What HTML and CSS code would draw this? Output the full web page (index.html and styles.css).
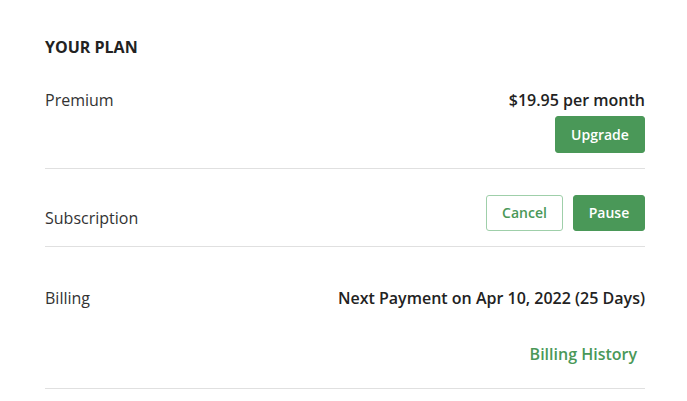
FILE: index.html
```html
<!DOCTYPE html>
<html lang="en">
<head>
<meta charset="utf-8">
<title>Your Plan</title>
<link rel="stylesheet" href="styles.css">
</head>
<body>
<section class="plan">
  <h2 class="plan-title">YOUR PLAN</h2>

  <div class="row row-premium">
    <div class="label">Premium</div>
    <div class="side">
      <div class="value">$19.95 per month</div>
      <button class="btn btn-solid btn-upgrade">Upgrade</button>
    </div>
  </div>

  <div class="row row-sub">
    <div class="label label-bottom">Subscription</div>
    <div class="actions">
      <button class="btn btn-outline">Cancel</button>
      <button class="btn btn-solid">Pause</button>
    </div>
  </div>

  <div class="row row-billing">
    <div class="label">Billing</div>
    <div class="side">
      <div class="value">Next Payment on Apr 10, 2022 (25 Days)</div>
      <a class="link" href="#">Billing History</a>
    </div>
  </div>
</section>
</body>
</html>
```

FILE: styles.css
```css
* { box-sizing: border-box; }

body {
  margin: 0;
  background: #ffffff;
  font-family: "Open Sans", "Noto Sans", sans-serif;
  color: #333333;
}

.plan {
  width: 600px;
  margin-left: 45px;
  padding-top: 36px;
}

.plan-title {
  margin: 0;
  font-size: 16px;
  font-weight: 700;
  line-height: 22px;
  color: #222222;
}

.row {
  display: flex;
  justify-content: space-between;
  align-items: flex-start;
  border-bottom: 1px solid #e0e0e0;
}

.label {
  font-size: 16px;
  line-height: 22px;
  color: #333333;
}

.label-bottom {
  align-self: flex-end;
  margin-bottom: 2px;
}

.side {
  display: flex;
  flex-direction: column;
  align-items: flex-end;
}

.value {
  font-size: 16px;
  font-weight: 600;
  line-height: 22px;
  color: #222222;
}

.row-premium { padding: 31px 0 15px; }
.row-sub { padding: 26px 0 15px; }
.row-billing { padding: 40px 0 23px; }

.btn {
  font-family: inherit;
  font-size: 14px;
  font-weight: 600;
  border-radius: 3px;
  height: 36px;
  padding: 0;
  cursor: pointer;
  line-height: 1;
}

.btn-solid {
  background: #4a9858;
  border: 1px solid #4a9858;
  color: #ffffff;
}

.btn-outline {
  background: #ffffff;
  border: 1px solid #9fcfaa;
  color: #4a9858;
}

.btn-upgrade {
  margin-top: 5px;
  height: 37px;
  width: 90px;
}

.actions {
  display: flex;
  gap: 10px;
}

.actions .btn-outline { width: 77px; }
.actions .btn-solid { width: 72px; }

.link {
  margin-top: 34px;
  margin-right: 8px;
  font-size: 16px;
  font-weight: 600;
  line-height: 22px;
  color: #4a9858;
  text-decoration: none;
}
```
